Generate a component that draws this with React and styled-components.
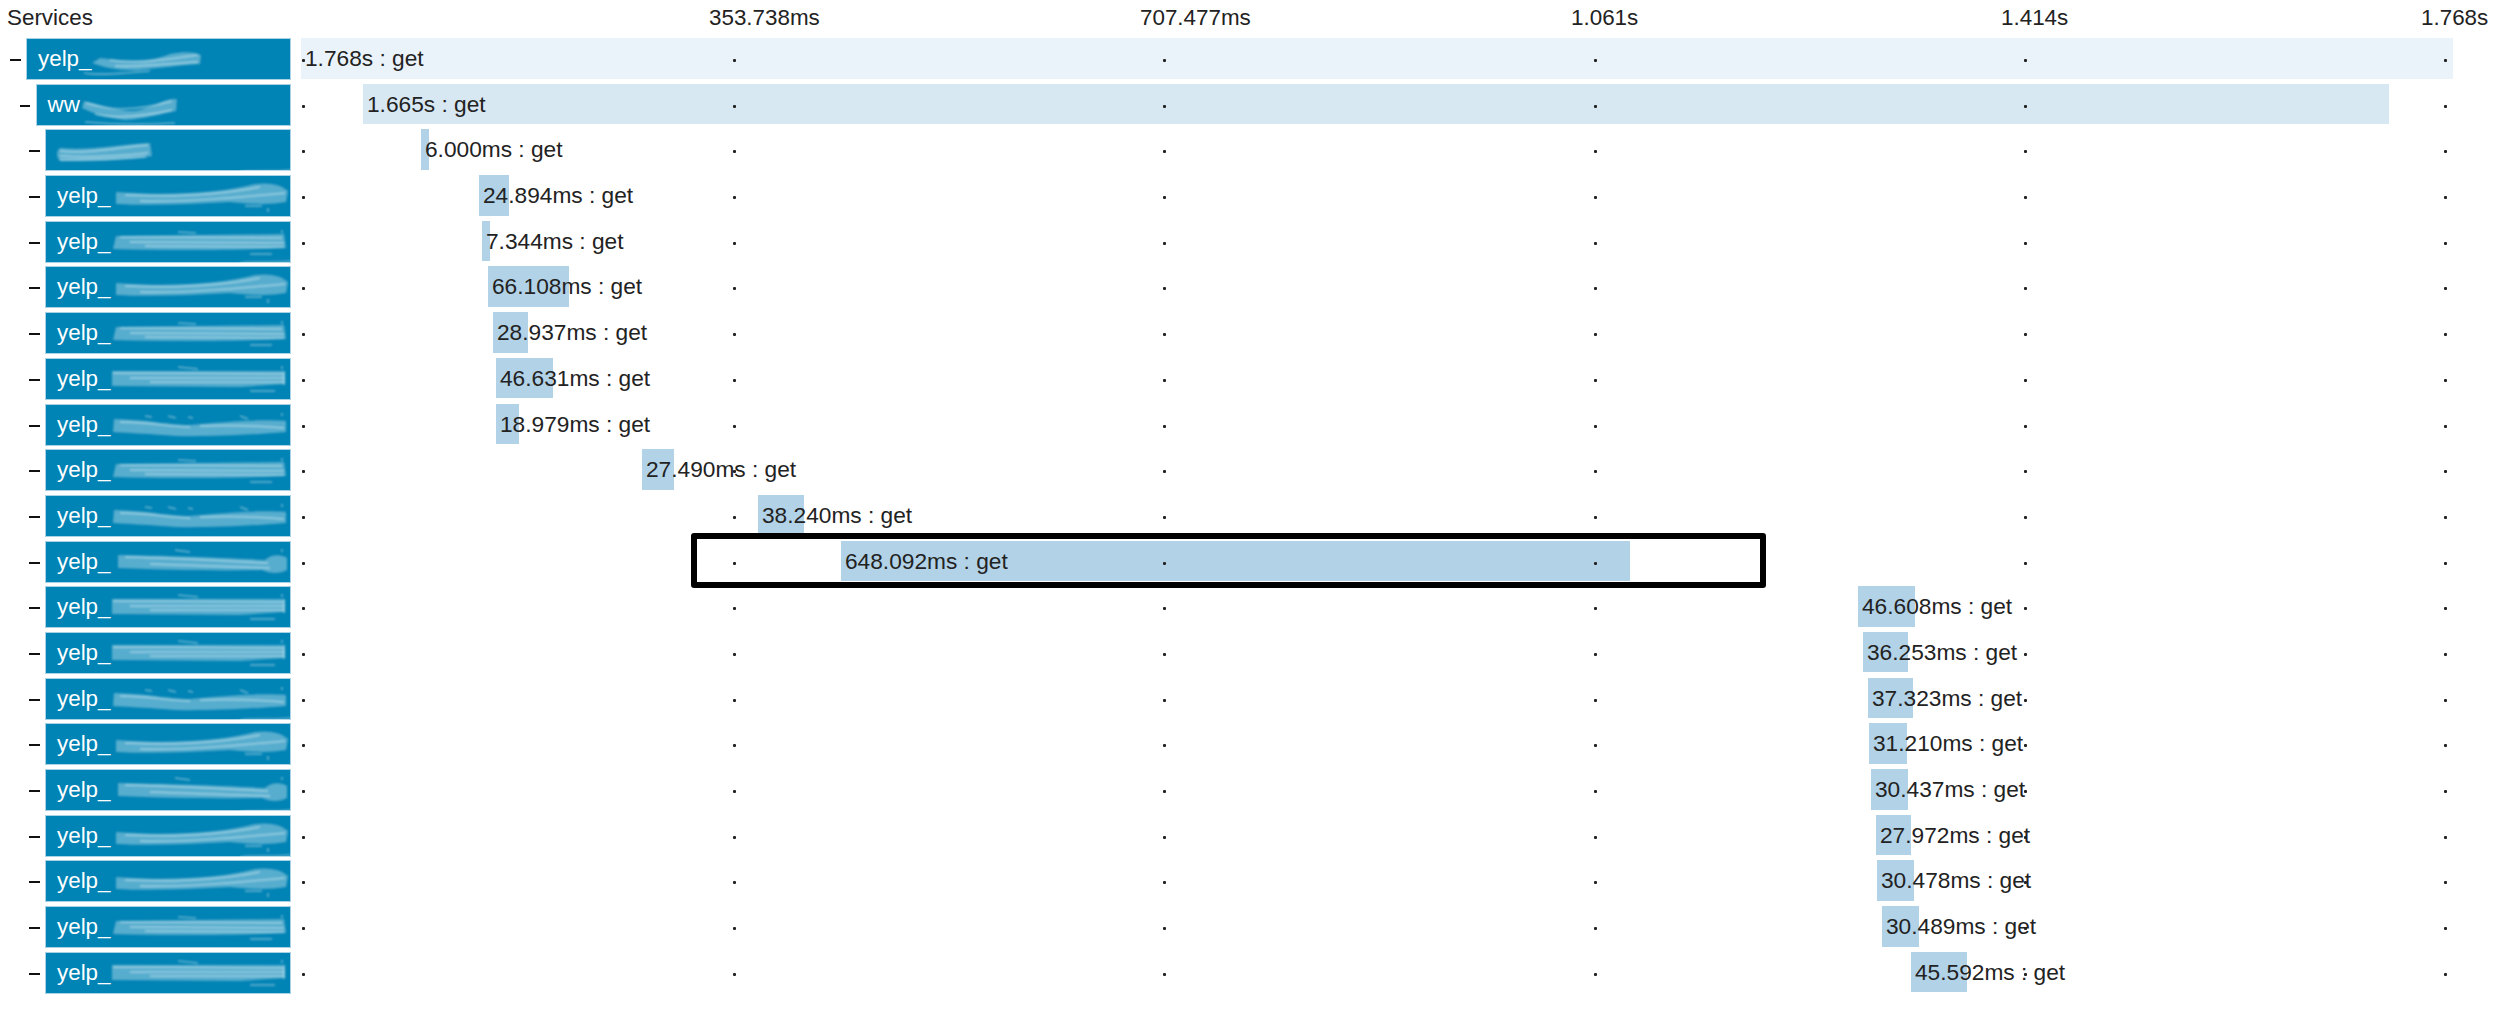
import React from 'react';
import styled, { createGlobalStyle } from 'styled-components';

const GlobalStyle = createGlobalStyle`
  html, body {
    margin: 0;
    padding: 0;
    background: #fff;
  }
  body {
    font-family: "Liberation Sans", Arial, sans-serif;
    color: #222;
    overflow: hidden;
  }
`;

const Page = styled.div`
  width: 2500px;
  height: 1016px;
  overflow: hidden;
`;

const Header = styled.div`
  display: flex;
  height: 38px;
  padding-left: 7px;
  font-size: 22.4px;
  line-height: 36px;
  white-space: nowrap;
`;

const HeaderTitle = styled.div`
  flex: 0 0 702px;
`;

const TickLabel = styled.div`
  flex: 0 0 ${({ $width }) => $width}px;
`;

const Chart = styled.div`
  position: relative;
  display: flex;
  flex-direction: column;
  gap: 3.7px;
`;

const Row = styled.div`
  display: grid;
  grid-template-columns: 291px 1fr;
  height: 42px;
`;

const ServiceCell = styled.div`
  display: flex;
  align-items: center;
  padding-left: ${({ $depth }) => 10 + $depth * 9.5}px;
`;

const Toggle = styled.span`
  flex: 0 0 16px;
  height: 2px;
  margin-top: 2px;
  position: relative;
  &::before {
    content: '';
    position: absolute;
    left: 0;
    top: 0;
    width: 10.5px;
    height: 2px;
    background: #111;
  }
`;

const ServiceLabel = styled.div`
  position: relative;
  flex: 1;
  height: 42px;
  box-sizing: border-box;
  border: 1px solid #a9d3e5;
  background: #0083b5;
  color: #fff;
  font-size: 22.4px;
  line-height: 39px;
  padding-left: 11px;
`;

const SmearSvg = styled.svg`
  position: absolute;
  right: -1px;
  top: -1px;
  width: 291px;
  height: 42px;
  overflow: visible;
  filter: blur(1.2px);
  pointer-events: none;
`;

const Track = styled.div`
  position: relative;
  height: 42px;
`;

const Bar = styled.div`
  position: absolute;
  top: 0;
  height: 40.5px;
  background: ${({ $tone }) => $tone};
  font-size: 22.7px;
  line-height: 40px;
  padding-left: 4px;
  box-sizing: border-box;
  white-space: nowrap;
  color: #222;
`;

const Dot = styled.i`
  position: absolute;
  top: 21px;
  width: 3px;
  height: 3px;
  border-radius: 1px;
  background: #222;
`;

const Highlight = styled.div`
  position: absolute;
  left: 691px;
  top: 495px;
  width: 1075px;
  height: 55px;
  box-sizing: border-box;
  border: 6px solid #000;
  border-radius: 3px;
  pointer-events: none;
`;

// scribbled-over part of each service name, x in page px, y from top of the label
const smears = {
  top: {
    body: 'M100 20 C130 24 150 24 170 16 C185 13 195 14 201 17 L200 26 C180 27 160 30 140 32 C120 33 106 30 92 25 Z',
    lines: ['M110 22 C140 26 165 22 198 17', 'M115 28 C140 29 165 26 198 24'],
    extra: ['M84 35 C100 38 125 35 150 33'],
  },
  www: {
    body: 'M84 17 C100 20 120 30 140 26 C155 22 165 14 177 15 L176 27 C160 30 145 35 125 36 C105 34 90 28 82 24 Z',
    lines: ['M86 19 C105 24 125 30 172 17', 'M95 30 C115 35 140 33 172 26'],
    extra: ['M85 38 C115 41 145 41 175 39'],
  },
  blank: {
    body: 'M60 19 C90 22 120 15 150 14 L152 27 C120 32 90 32 60 32 C56 28 56 22 60 19 Z',
    lines: ['M60 22 C90 25 120 18 148 16', 'M60 27 C90 29 120 27 148 24', 'M60 31 C90 31 120 30 146 28'],
    extra: [],
  },
  a: {
    body: 'M116 15 L284 13 L286 27 C240 29 170 30 113 28 Z',
    lines: ['M120 16 L282 17', 'M130 21 L284 22', 'M145 25 L284 26'],
    extra: ['M250 33 L272 33', 'M282 9 L282 12', 'M178 11 L196 12'],
  },
  b: {
    body: 'M116 17 C170 21 220 18 255 9 C270 7 282 10 288 16 L286 27 C270 30 250 29 230 27 C190 29 150 31 116 29 Z',
    lines: ['M125 20 C170 22 220 20 260 12', 'M140 26 C180 27 220 24 285 18'],
    extra: ['M240 -3 C258 -5 275 -3 291 -5', 'M245 31 L262 31', 'M268 33 L268 37'],
  },
  c: {
    body: 'M114 15 C150 16 170 21 190 21 C220 18 260 15 286 17 L286 28 C250 31 200 33 175 32 C150 30 130 29 113 28 Z',
    lines: ['M120 18 C150 18 170 23 190 23', 'M200 22 C230 21 260 22 284 24'],
    extra: ['M145 12 L152 13', 'M168 12 L176 14', 'M188 13 L193 14', 'M240 12 L248 15', 'M282 9 L282 12'],
  },
  d: {
    body: 'M112 13 L285 13 L285 26 L240 29 L112 28 Z',
    lines: ['M113 15 L283 16', 'M130 20 L284 20', 'M150 24 L284 24', 'M284 14 L284 27'],
    extra: ['M250 33 L275 33', 'M282 8 L282 11', 'M178 9 L198 11'],
  },
  e: {
    body: 'M118 14 C180 15 230 17 265 19 C270 13 282 13 287 17 L287 29 C280 33 270 33 262 29 C220 30 170 29 118 27 Z',
    lines: ['M125 16 C180 17 230 20 268 22', 'M150 23 C190 24 230 26 270 27'],
    extra: ['M282 8 L282 11', 'M175 9 L190 11'],
  },
};

const Smear = ({ kind }) => {
  const s = smears[kind];
  return (
    <SmearSvg viewBox="0 0 291 42" aria-hidden="true">
      <path d={s.body} fill="#fff" fillOpacity="0.34" />
      {s.lines.map((d) => (
        <path key={d} d={d} fill="none" stroke="#fff" strokeOpacity="0.45" strokeWidth="1.5" />
      ))}
      {s.extra.map((d) => (
        <path key={d} d={d} fill="none" stroke="#fff" strokeOpacity="0.4" strokeWidth="1.6" />
      ))}
    </SmearSvg>
  );
};

const ticks = [
  { label: '353.738ms', width: 431 },
  { label: '707.477ms', width: 431 },
  { label: '1.061s', width: 430 },
  { label: '1.414s', width: 420 },
  { label: '1.768s', width: 79 },
];

const dots = [303, 734, 1164, 1595, 2025, 2445];

const spans = [
  { name: 'yelp_', depth: 0, smear: 'top', from: 301, to: 2453, text: '1.768s : get', tone: '#ebf3fa' },
  { name: 'ww', depth: 1, smear: 'www', from: 363, to: 2389, text: '1.665s : get', tone: '#d8e8f3' },
  { name: '', depth: 2, smear: 'blank', from: 421, to: 429, text: '6.000ms : get' },
  { name: 'yelp_', depth: 2, smear: 'b', from: 479, to: 509, text: '24.894ms : get' },
  { name: 'yelp_', depth: 2, smear: 'a', from: 482, to: 490, text: '7.344ms : get' },
  { name: 'yelp_', depth: 2, smear: 'b', from: 488, to: 569, text: '66.108ms : get' },
  { name: 'yelp_', depth: 2, smear: 'a', from: 493, to: 528, text: '28.937ms : get' },
  { name: 'yelp_', depth: 2, smear: 'd', from: 496, to: 553, text: '46.631ms : get' },
  { name: 'yelp_', depth: 2, smear: 'c', from: 496, to: 519, text: '18.979ms : get' },
  { name: 'yelp_', depth: 2, smear: 'a', from: 642, to: 674, text: '27.490ms : get' },
  { name: 'yelp_', depth: 2, smear: 'c', from: 758, to: 804, text: '38.240ms : get' },
  { name: 'yelp_', depth: 2, smear: 'e', from: 841, to: 1630, text: '648.092ms : get' },
  { name: 'yelp_', depth: 2, smear: 'd', from: 1858, to: 1915, text: '46.608ms : get' },
  { name: 'yelp_', depth: 2, smear: 'd', from: 1863, to: 1908, text: '36.253ms : get' },
  { name: 'yelp_', depth: 2, smear: 'c', from: 1868, to: 1913, text: '37.323ms : get' },
  { name: 'yelp_', depth: 2, smear: 'b', from: 1869, to: 1907, text: '31.210ms : get' },
  { name: 'yelp_', depth: 2, smear: 'e', from: 1871, to: 1908, text: '30.437ms : get' },
  { name: 'yelp_', depth: 2, smear: 'b', from: 1876, to: 1911, text: '27.972ms : get' },
  { name: 'yelp_', depth: 2, smear: 'b', from: 1877, to: 1914, text: '30.478ms : get' },
  { name: 'yelp_', depth: 2, smear: 'a', from: 1882, to: 1919, text: '30.489ms : get' },
  { name: 'yelp_', depth: 2, smear: 'd', from: 1911, to: 1967, text: '45.592ms : get' },
];

const LABEL_COLUMN = 291;

const App = () => (
  <Page>
    <GlobalStyle />
    <Header>
      <HeaderTitle>Services</HeaderTitle>
      {ticks.map((t) => (
        <TickLabel key={t.label} $width={t.width}>{t.label}</TickLabel>
      ))}
    </Header>
    <Chart>
      {spans.map((s) => (
        <Row key={s.text}>
          <ServiceCell $depth={s.depth}>
            <Toggle />
            <ServiceLabel>
              {s.name}
              <Smear kind={s.smear} />
            </ServiceLabel>
          </ServiceCell>
          <Track>
            <Bar
              $tone={s.tone || '#b2d2e7'}
              style={{ left: s.from - LABEL_COLUMN, width: s.to - s.from }}
            >
              {s.text}
            </Bar>
            {dots.map((x) => (
              <Dot key={x} style={{ left: x - 1 - LABEL_COLUMN }} />
            ))}
          </Track>
        </Row>
      ))}
      <Highlight />
    </Chart>
  </Page>
);

export default App;
